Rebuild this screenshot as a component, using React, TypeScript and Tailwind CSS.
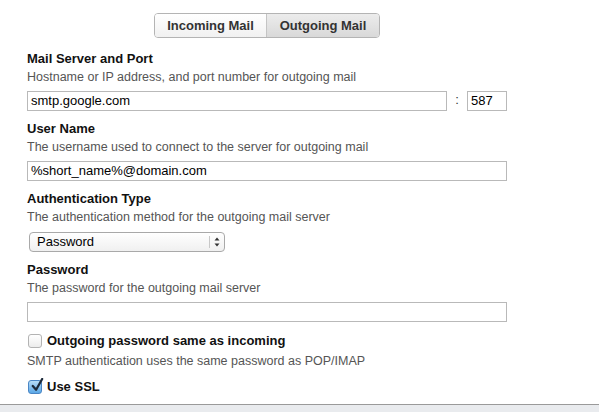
import React from "react";

function Checkbox({ checked }: { checked?: boolean }) {
  if (checked) {
    return (
      <span className="relative inline-block w-[14px] h-[14px] rounded-[3px] border border-[#4a86c5] bg-gradient-to-b from-[#b5dcf7] to-[#5aa7e6] shrink-0">
        <svg viewBox="0 0 16 16" className="absolute left-[1px] top-[-3px] w-[15px] h-[15px]">
          <path d="M3 8.5 L6.5 12.5 L13 1" fill="none" stroke="#1c2a3a" strokeWidth="2.4" strokeLinecap="round" strokeLinejoin="round" />
        </svg>
      </span>
    );
  }
  return (
    <span className="inline-block w-[14px] h-[14px] rounded-[3px] border border-[#b3b3b3] bg-gradient-to-b from-[#ffffff] to-[#ececec] shrink-0" />
  );
}

function Field({ label, desc, children }: { label: string; desc: string; children: React.ReactNode }) {
  return (
    <div className="flex flex-col">
      <div className="h-[18px] leading-[18px] font-bold text-[#111]">{label}</div>
      <div className="h-[18px] leading-[18px] text-[12.5px] text-[#555]">{desc}</div>
      {children}
    </div>
  );
}

function TextInput({ value, width }: { value: string; width: string }) {
  return (
    <div className={`${width} h-[20px] border border-[#b9b9b9] bg-white leading-[18px] px-[3px] text-[13px] text-black`}>
      {value}
    </div>
  );
}

export default function App() {
  return (
    <div
      className="w-[599px] h-[412px] bg-white overflow-hidden flex flex-col text-[13px]"
      style={{ fontFamily: '"Liberation Sans", Arial, sans-serif' }}
    >
      <div className="h-[404px] overflow-hidden flex flex-col pl-[27px]">
        <div className="w-[480px] pt-[13px] flex justify-center">
          <div className="flex h-[25px] rounded-[4px] border border-[#b4b4b4] overflow-hidden text-[13px] font-bold text-[#333]">
            <div className="w-[112px] flex items-center justify-center bg-gradient-to-b from-[#ffffff] to-[#f1f1f1] border-r border-[#c4c4c4]">
              Incoming Mail
            </div>
            <div className="w-[112px] flex items-center justify-center bg-gradient-to-b from-[#ececec] to-[#d9d9d9]">
              Outgoing Mail
            </div>
          </div>
        </div>

        <div className="pt-[12px] flex flex-col gap-[9px]">
          <Field label="Mail Server and Port" desc="Hostname or IP address, and port number for outgoing mail">
            <div className="mt-[5px] flex items-center">
              <TextInput value="smtp.google.com" width="w-[420px]" />
              <span className="w-[20px] text-center text-[#333] -mt-[3px]">:</span>
              <TextInput value="587" width="w-[40px]" />
            </div>
          </Field>

          <Field label="User Name" desc="The username used to connect to the server for outgoing mail">
            <div className="mt-[5px]">
              <TextInput value="%short_name%@domain.com" width="w-[480px]" />
            </div>
          </Field>

          <Field label="Authentication Type" desc="The authentication method for the outgoing mail server">
            <div className="mt-[6px] pl-[2px]">
              <div className="w-[196px] h-[20px] rounded-[4px] border border-[#a9a9a9] bg-gradient-to-b from-[#ffffff] to-[#f0f0f0] flex items-center">
                <span className="flex-1 pl-[7px] text-black leading-[18px]">Password</span>
                <span className="h-[12px] w-px bg-[#c8c8c8]" />
                <svg viewBox="0 0 14 18" className="w-[14px] h-[18px]">
                  <path d="M4.5 7.5 L7 4.5 L9.5 7.5 Z" fill="#333" />
                  <path d="M4.5 10.5 L7 13.5 L9.5 10.5 Z" fill="#333" />
                </svg>
              </div>
            </div>
          </Field>

          <Field label="Password" desc="The password for the outgoing mail server">
            <div className="mt-[5px]">
              <TextInput value="" width="w-[480px]" />
            </div>
          </Field>

          <div className="flex flex-col">
            <div className="h-[20px] flex items-center gap-[5px] pl-[1px]">
              <Checkbox />
              <span className="font-bold text-[#111]">Outgoing password same as incoming</span>
            </div>
            <div className="h-[18px] leading-[18px] text-[12.5px] text-[#555] mt-[1px]">
              SMTP authentication uses the same password as POP/IMAP
            </div>
            <div className="h-[18px] flex items-center gap-[5px] pl-[1px] mt-[8px]">
              <Checkbox checked />
              <span className="font-bold text-[#111]">Use SSL</span>
            </div>
            <div className="h-[18px] leading-[18px] text-[12.5px] text-[#555] mt-[4px]">
              Encrypt the connection to the outgoing mail server using SSL
            </div>
          </div>
        </div>
      </div>
      <div className="flex-1 border-t border-[#9a9a9a] bg-[#e9ebee]" />
    </div>
  );
}
